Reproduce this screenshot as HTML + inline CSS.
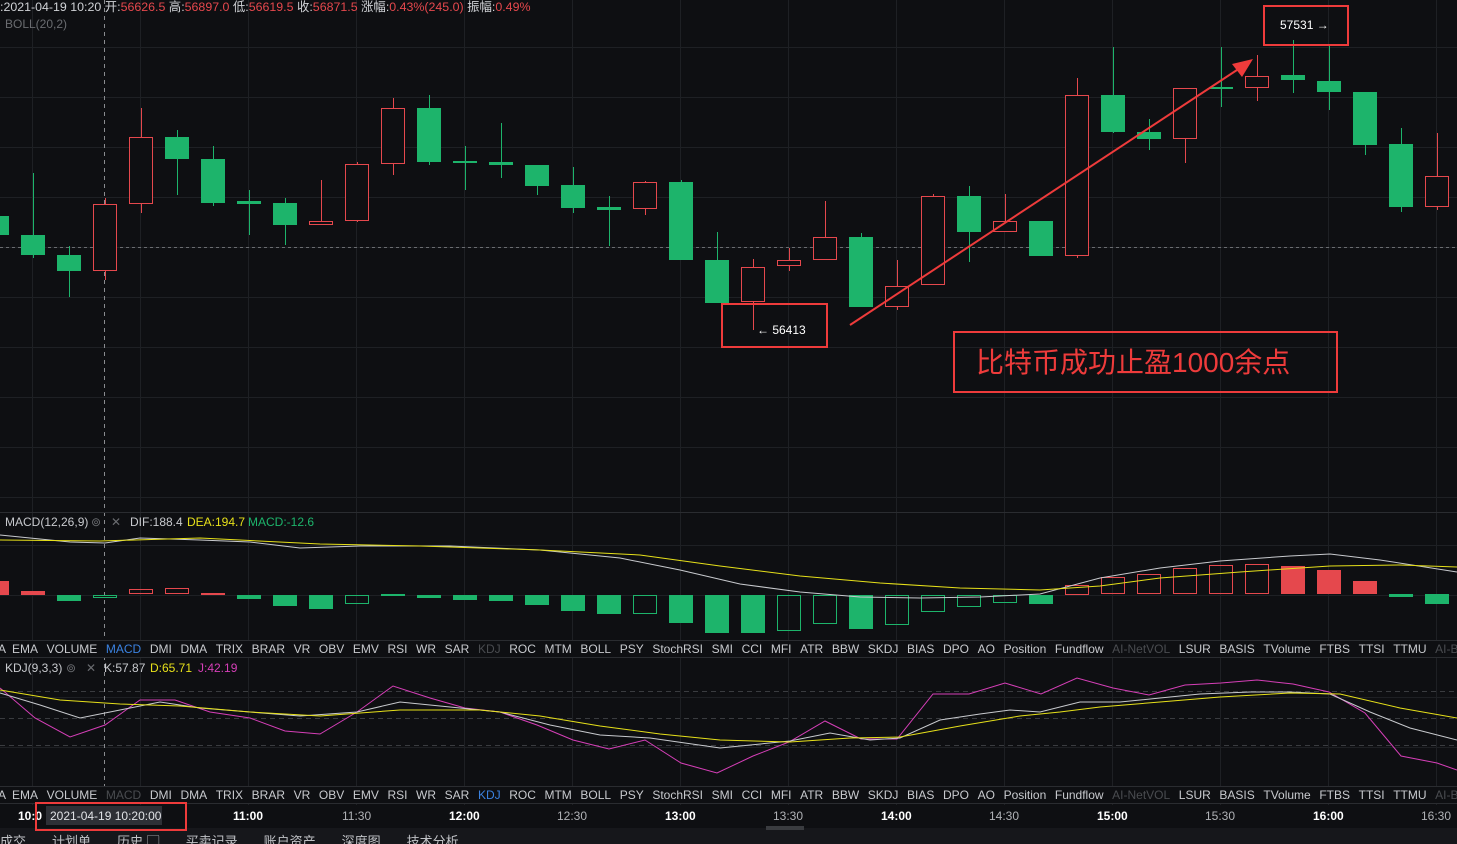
<!DOCTYPE html>
<html><head><meta charset="utf-8"><style>
html,body{margin:0;padding:0;background:#0e0f12;width:1457px;height:844px;overflow:hidden;font-family:"Liberation Sans","Noto Sans CJK SC",sans-serif}
svg{position:absolute;left:0;top:0}
</style></head><body>
<svg id="s" width="1457" height="844" xmlns="http://www.w3.org/2000/svg" font-family="Liberation Sans, Noto Sans CJK SC, sans-serif">
<rect width="1457" height="844" fill="#0e0f12"/>
<g id="grid" stroke="#1e2024" stroke-width="1"></g>
<line x1="0" y1="247.5" x2="1457" y2="247.5" stroke="#6a6c70" stroke-dasharray="3,3"/>
<line x1="104.5" y1="0" x2="104.5" y2="805" stroke="#8a8c90" stroke-dasharray="4,4"/>
<g id="c"></g>
<g id="m"></g>
<line x1="0" y1="512.5" x2="1457" y2="512.5" stroke="#2a2c30"/>
<rect x="0" y="640" width="1457" height="17" fill="#0e0f12"/>
<line x1="0" y1="640.5" x2="1457" y2="640.5" stroke="#2a2c30"/>
<line x1="0" y1="657.5" x2="1457" y2="657.5" stroke="#2a2c30"/>
<rect x="0" y="786" width="1457" height="18" fill="#0e0f12"/>
<line x1="0" y1="786.5" x2="1457" y2="786.5" stroke="#2a2c30"/>
<line x1="0" y1="803.5" x2="1457" y2="803.5" stroke="#2a2c30"/>
<rect x="0" y="828" width="1457" height="16" fill="#16171b"/>
<g stroke="#3a3c40" stroke-dasharray="5,4">
<line x1="0" y1="691.5" x2="1457" y2="691.5"/><line x1="0" y1="718.5" x2="1457" y2="718.5"/><line x1="0" y1="745.5" x2="1457" y2="745.5"/></g>
<g id="k" fill="none" stroke-width="1"></g>
<g font-size="12">
<text x="0" y="11" fill="#d0d2d6" font-size="12.4">:2021-04-19 10:20 <tspan>开:</tspan><tspan fill="#e5484d">56626.5</tspan> 高:<tspan fill="#e5484d">56897.0</tspan> 低:<tspan fill="#e5484d">56619.5</tspan> 收:<tspan fill="#e5484d">56871.5</tspan> 涨幅:<tspan fill="#e5484d">0.43%(245.0)</tspan> 振幅:<tspan fill="#e5484d">0.49%</tspan></text>
<text x="5" y="28" fill="#6a6c70">BOLL(20,2)</text>
<text x="5" y="526" fill="#c8cace">MACD(12,26,9)</text>
<text x="91" y="526" fill="#6a6c70">⊚</text>
<text x="111" y="526" fill="#6a6c70">✕</text>
<text x="130" y="526" fill="#c8cace">DIF:188.4</text>
<text x="187" y="526" fill="#e6e01a">DEA:194.7</text>
<text x="248" y="526" fill="#1db46b">MACD:-12.6</text>
<text x="5" y="672" fill="#c8cace">KDJ(9,3,3)</text>
<text x="66" y="672" fill="#6a6c70">⊚</text>
<text x="86" y="672" fill="#6a6c70">✕</text>
<text x="104" y="672" fill="#c8cace">K:57.87</text>
<text x="150" y="672" fill="#e6e01a">D:65.71</text>
<text x="198" y="672" fill="#d63fb8">J:42.19</text>
<text x="1280" y="29" fill="#fff">57531 →</text>
<text x="757" y="334" fill="#fff">← 56413</text>
</g>
<g id="ib1" font-size="12"></g>
<g font-size="12" fill="#b0b2b6">
<rect x="46" y="806" width="116" height="19" fill="#2e3036"/>
<text x="18" y="820" fill="#fff" font-weight="bold">10:0</text>
<text x="50" y="820" fill="#e0e2e6">2021-04-19 10:20:00</text>
<text x="233" y="820" fill="#fff" font-weight="bold">11:00</text>
<text x="342" y="820">11:30</text>
<text x="449" y="820" fill="#fff" font-weight="bold">12:00</text>
<text x="557" y="820">12:30</text>
<text x="665" y="820" fill="#fff" font-weight="bold">13:00</text>
<text x="773" y="820">13:30</text>
<text x="881" y="820" fill="#fff" font-weight="bold">14:00</text>
<text x="989" y="820">14:30</text>
<text x="1097" y="820" fill="#fff" font-weight="bold">15:00</text>
<text x="1205" y="820">15:30</text>
<text x="1313" y="820" fill="#fff" font-weight="bold">16:00</text>
<text x="1421" y="820">16:30</text>
<rect x="766" y="826" width="38" height="4" fill="#3a3c40"/>
<text x="0" y="846" fill="#c0c2c6" font-size="13">成交　　计划单　　历史 ▢　　买卖记录　　账户资产　　深度图　　技术分析</text>
</g>
<g fill="none" stroke="#ee3b3b" stroke-width="2">
<rect x="722" y="304" width="105" height="43"/>
<rect x="1264" y="6" width="84" height="39"/>
<rect x="954" y="332" width="383" height="60"/>
<rect x="36" y="803" width="150" height="27"/>
<line x1="850" y1="325" x2="1240" y2="68"/>
</g>
<polygon points="1253,59 1232,64 1242,77" fill="#ee3b3b"/>
<text x="976" y="372" fill="#ee3b3b" font-size="28">比特币成功止盈1000余点</text>
</svg>
<script>
var NS="http://www.w3.org/2000/svg";
function el(p,t,a){var e=document.createElementNS(NS,t);for(var k in a)e.setAttribute(k,a[k]);document.getElementById(p).appendChild(e);return e;}
var G="#1db46b",R="#e5484d";
for(var y=47;y<800;y+=50){if(y<512||(y>657&&y<786))el("grid","line",{x1:0,y1:y+.5,x2:1457,y2:y+.5});}
el("grid","line",{x1:0,y1:545.5,x2:1457,y2:545.5});el("grid","line",{x1:0,y1:595.5,x2:1457,y2:595.5});
for(var x=32;x<1457;x+=108)el("grid","line",{x1:x+.5,y1:0,x2:x+.5,y2:805});
var C=[[-3,216,235,216,235,'g'],[33,235,255,173,258,'g'],[69,255,271,246,297,'g'],[105,204,271,198,280,'r'],[141,137,204,108,213,'r'],[177,137,159,130,195,'g'],[213,159,203,146,206,'g'],[249,201,204,190,235,'g'],[285,203,225,198,245,'g'],[321,221,225,180,225,'r'],[357,164,221,162,222,'r'],[393,108,164,98,175,'r'],[429,108,162,95,165,'g'],[465,161,163,146,190,'g'],[501,162,165,123,178,'g'],[537,165,186,165,195,'g'],[573,185,208,167,213,'g'],[609,207,210,196,246,'g'],[645,182,209,181,215,'r'],[681,182,260,180,260,'g'],[717,260,303,232,303,'g'],[753,267,302,259,330,'r'],[789,260,266,248,271,'r'],[825,237,260,201,260,'r'],[861,237,307,233,307,'g'],[897,286,307,260,310,'r'],[933,196,285,194,285,'r'],[969,196,232,186,262,'g'],[1005,221,232,194,232,'r'],[1041,221,256,221,256,'g'],[1077,95,256,78,258,'r'],[1113,95,132,47,133,'g'],[1149,132,139,119,150,'g'],[1185,88,139,88,163,'r'],[1221,87,89,47,107,'g'],[1257,76,88,55,101,'r'],[1293,75,80,40,93,'g'],[1329,81,92,45,110,'g'],[1365,92,145,92,155,'g'],[1401,144,207,128,212,'g'],[1437,176,207,133,210,'r']];
C.forEach(function(c){var col=c[5]=='g'?G:R;el("c","line",{x1:c[0]+.5,y1:c[3],x2:c[0]+.5,y2:c[4],stroke:col});
if(c[5]=='g')el("c","rect",{x:c[0]-12,y:c[1],width:24,height:Math.max(2,c[2]-c[1]),fill:G});
else{el("c","rect",{x:c[0]-11.5,y:c[1]+.5,width:23,height:Math.max(1,c[2]-c[1]-1),fill:"#0e0f12",stroke:R});}});
var M=[[-3,581,595,'R'],[33,591,595,'R'],[69,595,601,'G'],[105,595,598,'g'],[141,589,594,'r'],[177,588,594,'r'],[213,593,595,'R'],[249,595,599,'G'],[285,595,606,'G'],[321,595,609,'G'],[357,595,604,'g'],[393,594,596,'G'],[429,595,598,'G'],[465,595,600,'G'],[501,595,601,'G'],[537,595,605,'G'],[573,595,611,'G'],[609,595,614,'G'],[645,595,614,'g'],[681,595,623,'G'],[717,595,633,'G'],[753,595,633,'G'],[789,595,631,'g'],[825,595,624,'g'],[861,595,629,'G'],[897,595,625,'g'],[933,595,612,'g'],[969,595,607,'g'],[1005,595,603,'g'],[1041,595,604,'G'],[1077,585,595,'r'],[1113,577,594,'r'],[1149,574,594,'r'],[1185,568,594,'r'],[1221,565,594,'r'],[1257,564,594,'r'],[1293,566,594,'R'],[1329,570,594,'R'],[1365,581,594,'R'],[1401,594,597,'G'],[1437,594,604,'G']];
M.forEach(function(m){var h=m[2]-m[1];if(m[3]=='G'||m[3]=='R')el("m","rect",{x:m[0]-12,y:m[1],width:24,height:h,fill:m[3]=='G'?G:R});
else el("m","rect",{x:m[0]-11.5,y:m[1]+.5,width:23,height:h-1,fill:"none",stroke:m[3]=='g'?G:R});});
el("m","polyline",{points:"0,535 70,542 105,543 140,538 200,540 250,542 300,548 360,546 450,546 540,550 620,558 680,570 740,584 800,592 860,597 920,598 980,597 1040,594 1100,578 1160,568 1220,561 1290,556 1330,554 1380,560 1457,572",fill:"none",stroke:"#c8cace"});
el("m","polyline",{points:"0,540 100,541 200,538 320,544 420,546 540,550 640,555 720,566 800,576 880,583 960,588 1040,590 1100,586 1160,578 1240,572 1330,566 1400,565 1457,567",fill:"none",stroke:"#e6e01a"});
el("k","polyline",{points:"0,688 35,718 70,737 105,725 140,700 175,700 210,712 250,718 285,731 320,734 357,712 393,686 430,698 465,708 500,712 537,725 573,740 609,749 645,740 681,763 717,773 753,756 789,742 825,721 861,739 897,739 933,694 969,694 1005,683 1041,694 1077,678 1113,688 1149,695 1185,685 1221,683 1257,680 1293,684 1329,692 1365,713 1401,756 1437,763 1457,770",stroke:"#d63fb8"});
el("k","polyline",{points:"0,693 40,705 80,718 120,710 160,702 200,708 250,712 300,716 357,712 400,702 450,707 500,712 550,725 600,735 650,738 720,748 790,741 830,733 870,740 900,738 940,720 980,714 1010,710 1040,712 1080,702 1120,702 1160,698 1200,694 1250,692 1290,692 1330,694 1370,712 1410,728 1457,740",stroke:"#c8cace"});
el("k","polyline",{points:"0,690 60,700 120,704 180,706 250,712 320,716 400,710 480,710 540,716 600,726 660,734 720,740 790,742 850,738 900,737 960,726 1020,716 1060,712 1100,707 1160,702 1220,697 1290,693 1340,694 1400,708 1457,718",stroke:"#e6e01a"});
var L=["EMA","VOLUME","MACD","DMI","DMA","TRIX","BRAR","VR","OBV","EMV","RSI","WR","SAR","KDJ","ROC","MTM","BOLL","PSY","StochRSI","SMI","CCI","MFI","ATR","BBW","SKDJ","BIAS","DPO","AO","Position","Fundflow","AI-NetVOL","LSUR","BASIS","TVolume","FTBS","TTSI","TTMU","AI-BS"];
[[653,"MACD","KDJ"],[799,"KDJ","MACD"]].forEach(function(r){var x=12;var g=document.getElementById("ib1");
var t=document.createElementNS(NS,"text");t.setAttribute("x",-2);t.setAttribute("y",r[0]);t.setAttribute("fill","#c8cace");t.textContent="A";g.appendChild(t);
L.forEach(function(w){var f="#c8cace";if(w==r[1])f="#3b82e0";if(w==r[2]||w=="AI-NetVOL"||w=="AI-BS")f="#4a4c50";
var t=document.createElementNS(NS,"text");t.setAttribute("x",x);t.setAttribute("y",r[0]);t.setAttribute("fill",f);t.textContent=w;g.appendChild(t);x+=t.getComputedTextLength()+8.6;});});
</script>
</body></html>
